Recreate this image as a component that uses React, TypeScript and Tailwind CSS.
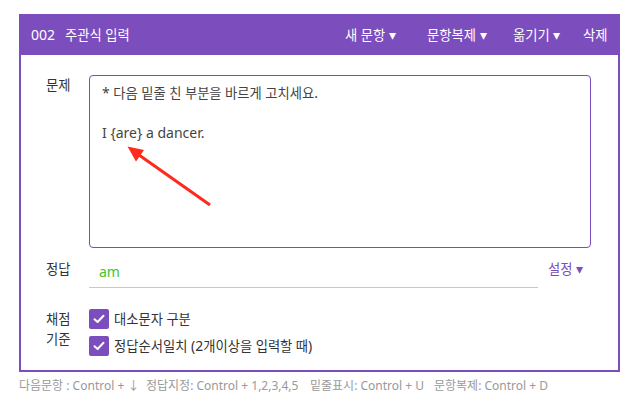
import React from "react";

const font = { fontFamily: '"Noto Sans", "Noto Sans CJK KR", sans-serif' };

function Check() {
  return (
    <span className="flex h-[20px] w-[20px] items-center justify-center rounded-[2px] bg-[#7c4dbd]">
      <svg width="12" height="10" viewBox="0 0 12 10">
        <path d="M1.5 5.2 L4.6 8 L10.5 1.8" fill="none" stroke="white" strokeWidth="2" strokeLinecap="round" strokeLinejoin="round" />
      </svg>
    </span>
  );
}

function K({ children }: { children: React.ReactNode }) {
  return <span className="text-[13.3px]">{children}</span>;
}

export default function App() {
  return (
    <div className="relative h-[407px] w-[633px] bg-white" style={font}>
      <div className="pl-[19px] pt-[14px]">
        <div className="w-[601px] border-x-2 border-b-2 border-[#7c4dbd]">
          <div className="flex h-[41px] items-center bg-[#7c4dbd] pl-[10px] text-[14px] text-white">
            <span className="w-[34px]">002</span>
            <span><K>주관식 입력</K></span>
            <span className="ml-auto w-[82px]"><K>새 문항</K> ▾</span>
            <span className="w-[86px]"><K>문항복제</K> ▾</span>
            <span className="w-[70px]"><K>옮기기</K> ▾</span>
            <span className="w-[35px]"><K>삭제</K></span>
          </div>
          <div className="pb-[14px] pl-[25px] pr-[27px] pt-[20px] text-[14px] text-[#333]">
            <div className="flex">
              <div className="w-[43px] leading-[20px]"><K>문제</K></div>
              <div className="h-[173px] flex-1 rounded-[4px] border border-[#7c4dbd] px-[12px] pt-[7px] leading-[20px] text-[#444]">
                <div>* <K>다음 밑줄 친 부분을 바르게 고치세요</K>.</div>
                <div className="h-[20px]" />
                <div>I {"{are}"} a dancer.</div>
              </div>
            </div>
            <div className="mt-[11px] flex items-start">
              <div className="w-[43px] leading-[20px]"><K>정답</K></div>
              <div className="h-[29px] w-[449px] border-b border-[#c8c8c8] pl-[10px] pt-[3px] leading-[20px] text-[#44c22a]">am</div>
              <div className="ml-[10px] leading-[20px] text-[#7c4dbd]"><K>설정</K> ▾</div>
            </div>
            <div className="mt-[21px] flex">
              <div className="w-[43px] leading-[20px]">
                <div><K>채점</K></div>
                <div><K>기준</K></div>
              </div>
              <div className="flex flex-col gap-[7px]">
                <div className="flex items-center gap-[5px] leading-[20px]">
                  <Check />
                  <K>대소문자 구분</K>
                </div>
                <div className="flex items-center gap-[5px] leading-[20px]">
                  <Check />
                  <span><K>정답순서일치</K> (2<K>개이상을 입력할 때</K>)</span>
                </div>
              </div>
            </div>
          </div>
        </div>
        <div className="mt-[6px] flex whitespace-nowrap text-[12px] leading-[16px] text-[#999]">
          <span className="w-[127px]">다음문항 : Control + ↓</span>
          <span className="w-[164px]">정답지정: Control + 1,2,3,4,5</span>
          <span className="w-[124px]">밑줄표시: Control + U</span>
          <span>문항복제: Control + D</span>
        </div>
      </div>
      <svg className="pointer-events-none absolute left-0 top-0" width="633" height="407">
        <line x1="210" y1="205" x2="139" y2="155" stroke="#ff2a1a" strokeWidth="3" />
        <polygon points="127.5,146.5 144,150 136,161.5" fill="#ff2a1a" />
      </svg>
    </div>
  );
}
